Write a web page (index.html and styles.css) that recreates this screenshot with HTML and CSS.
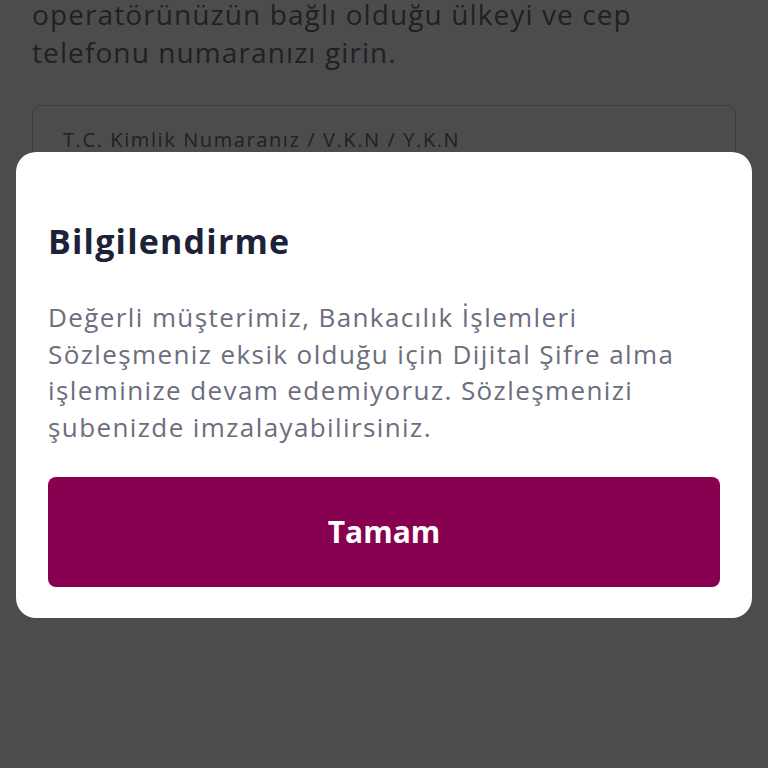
FILE: index.html
```html
<!DOCTYPE html>
<html lang="tr">

<head>
    <meta charset="UTF-8">
    <meta name="viewport" content="width=device-width, initial-scale=1.0">
    <title>Dijital Şifre</title>
    <link rel="stylesheet" href="styles.css">
</head>

<body>
    <div class="page">
        <p class="intro">operatörünüzün bağlı olduğu ülkeyi ve cep telefonu numaranızı girin.</p>
        <div class="field">
            <input type="text" placeholder="T.C. Kimlik Numaranız / V.K.N / Y.K.N">
        </div>
    </div>

    <div class="overlay">
        <div class="dialog">
            <h2>Bilgilendirme</h2>
            <p>Değerli müşterimiz, Bankacılık İşlemleri Sözleşmeniz eksik olduğu için Dijital Şifre alma işleminize devam edemiyoruz. Sözleşmenizi şubenizde imzalayabilirsiniz.</p>
            <button type="button" class="ok-btn">Tamam</button>
        </div>
    </div>
</body>

</html>
```

FILE: styles.css
```css
body {
    font-family: "Open Sans", "Noto Sans", sans-serif;
    margin: 0;
    background-color: white;
    height: 768px;
    overflow: hidden;
}

.page {
    padding: 0 32px;
}

.intro {
    margin: -5px 0 0 0;
    font-size: 28px;
    line-height: 38px;
    letter-spacing: 1.1px;
    color: #6b6e7d;
    width: 660px;
}

.field {
    margin-top: 34px;
}

.field input {
    width: 100%;
    box-sizing: border-box;
    height: 72px;
    padding: 0 30px 4px;
    border: 1px solid #ccc;
    border-radius: 8px;
    font-family: "Open Sans", sans-serif;
    font-size: 20px;
    letter-spacing: 1.6px;
}

.field input::placeholder {
    color: #6b6e7d;
}

.overlay {
    position: fixed;
    inset: 0;
    background-color: rgba(0, 0, 0, 0.7);
    padding: 152px 16px 0;
}

.dialog {
    background-color: white;
    border-radius: 20px;
    padding: 67px 32px 31px;
}

.dialog h2 {
    margin: 0;
    font-size: 34px;
    line-height: 44px;
    font-weight: 700;
    letter-spacing: 1.2px;
    color: #1e2238;
}

.dialog p {
    margin: 36px 0 0 0;
    font-size: 26px;
    line-height: 36.7px;
    letter-spacing: 1.4px;
    color: #6b6e7d;
}

.ok-btn {
    display: block;
    width: 100%;
    height: 110px;
    margin-top: 31px;
    background-color: #880050;
    color: white;
    border: none;
    border-radius: 8px;
    font-family: "Open Sans", sans-serif;
    font-size: 30px;
    font-weight: 700;
    cursor: pointer;
}
```
